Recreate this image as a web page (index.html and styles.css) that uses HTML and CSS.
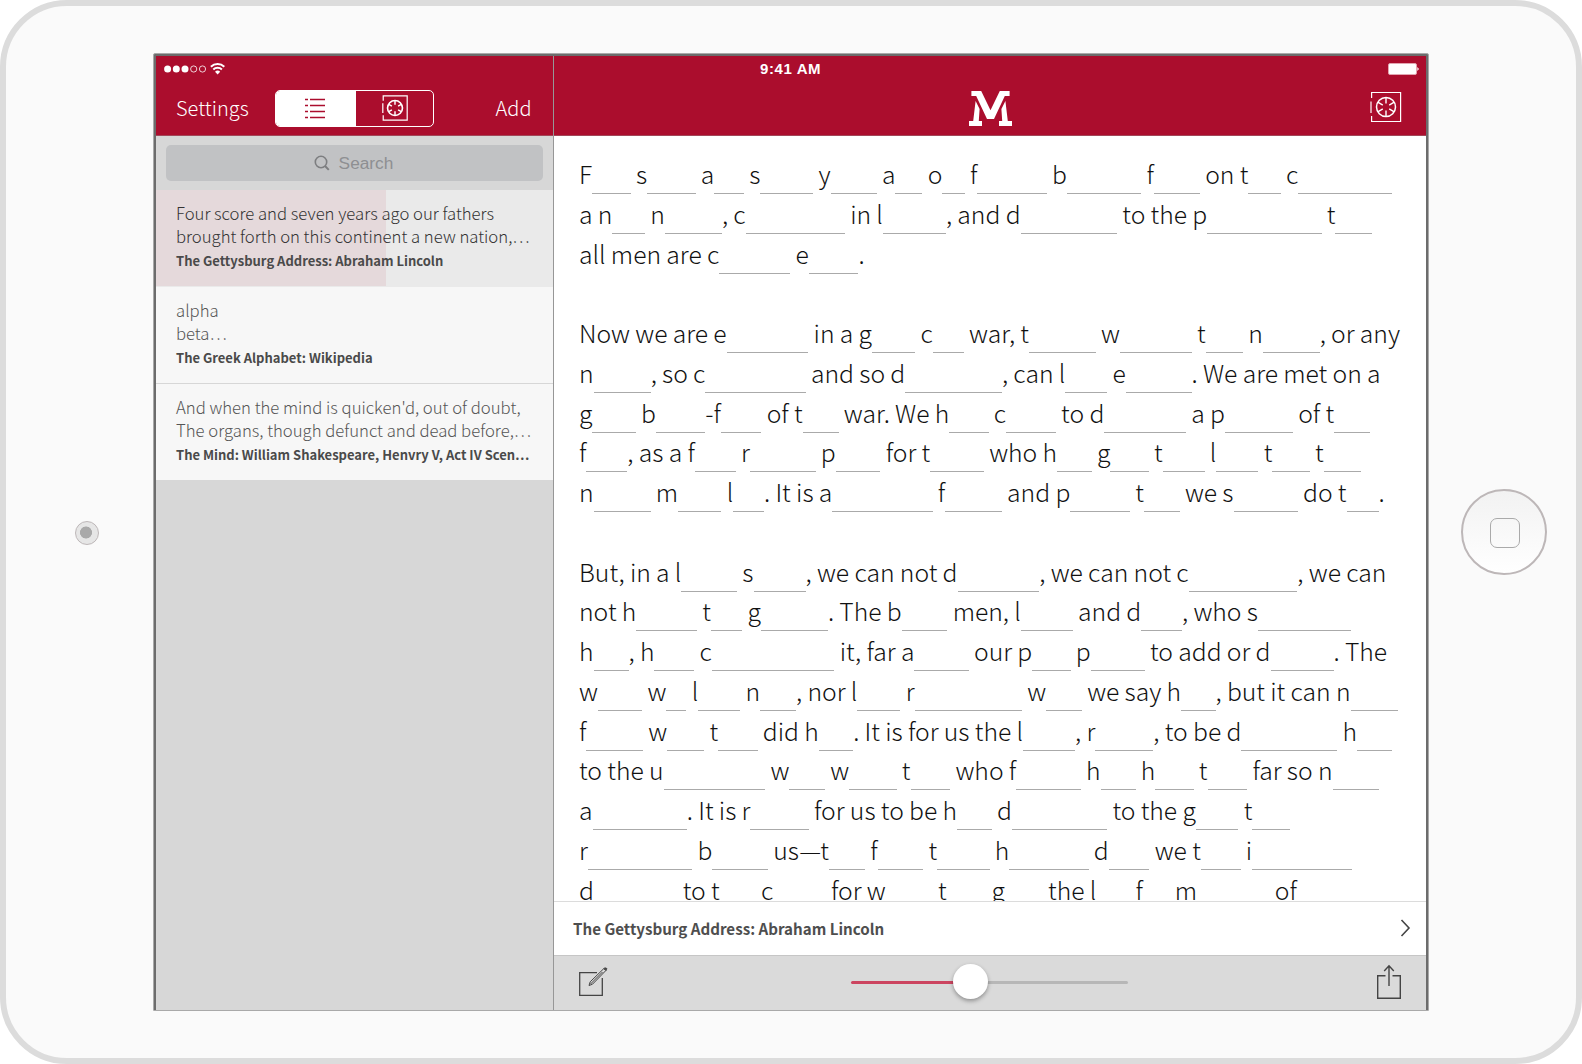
FILE: index.html
```html
<!DOCTYPE html>
<html lang="en">
<head>
<meta charset="utf-8">
<title>The Gettysburg Address</title>
<link rel="stylesheet" href="styles.css">
</head>
<body>
<div class="device">
  <div class="bezel bezel-left"><div class="camera"></div></div>
  <div class="screen">
    <aside class="sidebar">
      <header class="bar side-bar">
        <div class="status">
          <svg width="62" height="14" viewBox="0 0 62 14" fill="#fff">
            <circle cx="3.6" cy="7" r="3.5"/><circle cx="12.3" cy="7" r="3.5"/><circle cx="21" cy="7" r="3.5"/>
            <g fill="none" stroke="#fff" stroke-width=".8"><circle cx="29.7" cy="7" r="3.1"/><circle cx="38.5" cy="7" r="3.1"/></g>
            <g fill="none" stroke="#fff" stroke-width="2"><path d="M46.9 4.7a9.6 9.6 0 0 1 13.4 0M49.3 7.5a6.2 6.2 0 0 1 8.6 0"/></g>
            <path d="M53.6 12.4l-2.6-2.6a3.8 3.8 0 0 1 5.2 0z"/>
          </svg>
        </div>
        <nav class="nav">
          <span class="link">Settings</span>
          <div class="segments">
            <span class="segment on">
              <svg width="22" height="22" viewBox="0 0 22 22" stroke="#ab0d2d" stroke-width="1.3" fill="none"><path d="M1 1.5h3M6 1.5h15M1 7.5h3M6 7.5h15M1 13.5h3M6 13.5h15M1 19.5h3M6 19.5h15"/></svg>
            </span>
            <span class="segment">
              <svg width="26" height="26" viewBox="0 0 32 32" fill="none" stroke="#fff" stroke-width="1.5"><path d="M1.5 7V1H31v30H1.5v-6M1 10v12"/><circle cx="16" cy="16" r="9.2" stroke-width="2"/><path stroke-width="1.8" d="M16 7v5M16 20v5M8.2 11.5l4 2.3M19.8 18.2l4 2.3M8.2 20.5l4-2.3M19.8 13.8l4-2.3"/></svg>
            </span>
          </div>
          <span class="link">Add</span>
        </nav>
      </header>
      <div class="search">
        <div class="search-box">
          <svg width="16" height="16" viewBox="0 0 16 16" fill="none" stroke="#7d7e80" stroke-width="1.6"><circle cx="7" cy="7" r="5.7"/><path d="M11 11l3.8 3.9" stroke-width="2"/></svg>
          <span>Search</span>
        </div>
      </div>
      <ul class="list">
        <li class="item selected"><p>Four score and seven years ago our fathers</p><p>brought forth on this continent a new nation,…</p><b>The Gettysburg Address: Abraham Lincoln</b></li>
        <li class="item"><p>alpha</p><p>beta…</p><b>The Greek Alphabet: Wikipedia</b></li>
        <li class="item"><p>And when the mind is quicken'd, out of doubt,</p><p>The organs, though defunct and dead before,…</p><b>The Mind: William Shakespeare, Henvry V, Act IV Scen…</b></li>
      </ul>
    </aside>
    <main class="reader">
      <header class="bar main-bar">
        <span class="time">9:41 AM</span>
        <svg class="logo" width="43" height="35" viewBox="0 0 43 35" fill="#fff"><path d="M2.4 0h9.8l9.3 19.3L30.8 0h9.8v5h-4.8L25 28h-7L7.200 5H2.400z"/><path d="M6.600 10l4 8-.8 12H13v5H0v-5h4.200zM36.400 10l-4 8 .8 12H30v5h13v-5h-4.200z"/></svg>
        <div class="right-tools">
          <svg width="31" height="12" viewBox="0 0 31 12" fill="#fff"><rect x=".5" y=".5" width="28" height="11" rx="1.500" fill="#fff" stroke="#e3a5b1"/><path d="M29.300 4l1.700 2-1.700 2z"/></svg>
          <svg class="mode" width="32" height="32" viewBox="0 0 32 32" fill="none" stroke="#fff" stroke-width="1.200"><path d="M1.600 7V1.500h29v29h-29V25M1 10.500v11.500"/><circle cx="16" cy="16" r="9.500" stroke-width="1.500"/><path stroke-width="1.400" d="M16 6.500v6M16 19.500v6M7.800 11.200l5 3M19.200 17.800l5 3M7.800 20.800l5-3M19.200 14.200l5-3"/></svg>
        </div>
      </header>
      <article class="text">
        <p>F<i style="width:38.7px"></i> s<i style="width:48.3px"></i> a<i style="width:29.7px"></i> s<i style="width:53px"></i> y<i style="width:46px"></i> a<i style="width:27px"></i> o<i style="width:22.3px"></i> f<i style="width:69.4px"></i> b<i style="width:74.6px"></i> f<i style="width:46px"></i> on t<i style="width:32.3px"></i> c<i style="width:93.9px"></i></p>
        <p>a n<i style="width:32.7px"></i> n<i style="width:57px"></i>, c<i style="width:99.3px"></i> in l<i style="width:63px"></i>, and d<i style="width:96.5px"></i> to the p<i style="width:114.3px"></i> t<i style="width:36.7px"></i></p>
        <p>all men are c<i style="width:71px"></i> e<i style="width:49.7px"></i>.</p>
        <p></p>
        <p>Now we are e<i style="width:81.7px"></i> in a g<i style="width:43.3px"></i> c<i style="width:31px"></i> war, t<i style="width:66.7px"></i> w<i style="width:72px"></i> t<i style="width:37.3px"></i> n<i style="width:56.7px"></i>, or any</p>
        <p>n<i style="width:57px"></i>, so c<i style="width:100.3px"></i> and so d<i style="width:96.7px"></i>, can l<i style="width:42px"></i> e<i style="width:65.7px"></i>. We are met on a</p>
        <p>g<i style="width:43.3px"></i> b<i style="width:49.3px"></i>-f<i style="width:40.7px"></i> of t<i style="width:36px"></i> war. We h<i style="width:39.3px"></i> c<i style="width:49.7px"></i> to d<i style="width:81.7px"></i> a p<i style="width:68px"></i> of t<i style="width:36px"></i></p>
        <p>f<i style="width:41px"></i>, as a f<i style="width:41px"></i> r<i style="width:65.7px"></i> p<i style="width:44.7px"></i> for t<i style="width:53.7px"></i> who h<i style="width:34.7px"></i> g<i style="width:38.3px"></i> t<i style="width:42px"></i> l<i style="width:42px"></i> t<i style="width:37.3px"></i> t<i style="width:37px"></i></p>
        <p>n<i style="width:57px"></i> m<i style="width:43.3px"></i> l<i style="width:30.7px"></i>. It is a<i style="width:100.3px"></i> f<i style="width:56.7px"></i> and p<i style="width:59.7px"></i> t<i style="width:35.7px"></i> we s<i style="width:64.3px"></i> do t<i style="width:32px"></i>.</p>
        <p></p>
        <p>But, in a l<i style="width:55.7px"></i> s<i style="width:52px"></i>, we can not d<i style="width:81.7px"></i>, we can not c<i style="width:108.7px"></i>, we can</p>
        <p>not h<i style="width:60.7px"></i> t<i style="width:31.3px"></i> g<i style="width:67px"></i>. The b<i style="width:45.7px"></i> men, l<i style="width:52px"></i> and d<i style="width:40.7px"></i>, who s<i style="width:93px"></i></p>
        <p>h<i style="width:35px"></i>, h<i style="width:39.7px"></i> c<i style="width:122.7px"></i> it, far a<i style="width:54.3px"></i> our p<i style="width:38.3px"></i> p<i style="width:54px"></i> to add or d<i style="width:63px"></i>. The</p>
        <p>w<i style="width:44.3px"></i> w<i style="width:20px"></i> l<i style="width:42px"></i> n<i style="width:36px"></i>, nor l<i style="width:43px"></i> r<i style="width:107.5px"></i> w<i style="width:35.7px"></i> we say h<i style="width:34.4px"></i>, but it can n<i style="width:47px"></i></p>
        <p>f<i style="width:56.7px"></i> w<i style="width:37px"></i> t<i style="width:39.4px"></i> did h<i style="width:34.4px"></i>. It is for us the l<i style="width:52px"></i>, r<i style="width:58px"></i>, to be d<i style="width:96px"></i> h<i style="width:34.7px"></i></p>
        <p>to the u<i style="width:101.7px"></i> w<i style="width:35.7px"></i> w<i style="width:47.3px"></i> t<i style="width:39.7px"></i> who f<i style="width:64.6px"></i> h<i style="width:35px"></i> h<i style="width:38.3px"></i> t<i style="width:39.7px"></i> far so n<i style="width:46.7px"></i></p>
        <p>a<i style="width:94.3px"></i>. It is r<i style="width:58.3px"></i> for us to be h<i style="width:34.7px"></i> d<i style="width:95.3px"></i> to the g<i style="width:42.6px"></i> t<i style="width:37.3px"></i></p>
        <p>r<i style="width:104.3px"></i> b<i style="width:55.7px"></i> us—t<i style="width:36px"></i> f<i style="width:45.7px"></i> t<i style="width:52.3px"></i> h<i style="width:79.3px"></i> d<i style="width:40.7px"></i> we t<i style="width:39.7px"></i> i<i style="width:100.3px"></i></p>
        <p>d<i style="width:83.5px"></i> to t<i style="width:36px"></i> c<i style="width:52.500px"></i> for w<i style="width:47px"></i> t<i style="width:39.500px"></i> g<i style="width:38px"></i> the l<i style="width:34px"></i> f<i style="width:26.500px"></i> m<i style="width:72.500px"></i> of</p>
      </article>
      <div class="source">
        <b>The Gettysburg Address: Abraham Lincoln</b>
        <svg width="11" height="18" viewBox="0 0 11 18" fill="none" stroke="#444" stroke-width="1.600"><path d="M1.500 1l7.500 8-7.500 8"/></svg>
      </div>
      <footer class="toolbar">
        <svg width="30" height="30" viewBox="0 0 30 30" fill="none" stroke="#444" stroke-width="1.300"><path d="M19 5.700H1.700v22.600h22.600V11"/><path d="M11 18.500l1.200-3.700L25.800 1.600l2 2L14.500 17.200zM12.500 17l12-12" stroke-width="1"/><path d="M26 1.500l1-.8 2 .9-1 2z" fill="#444" stroke-width=".8"/></svg>
        <div class="slider"><span class="done"></span><span class="rest"></span><span class="knob"></span></div>
        <svg width="26" height="36" viewBox="0 0 26 36" fill="none" stroke="#444" stroke-width="1.400"><path d="M9.500 11.700H1.700v22.600h22.600V11.700h-7.800M13 22V2M8.200 7L13 1.700 17.800 7"/></svg>
      </footer>
    </main>
  </div>
  <div class="bezel bezel-right"><div class="home"><span></span></div></div>
</div>
</body>
</html>
```
FILE: styles.css
```css
* { box-sizing: border-box; }
body { margin: 0; background: #fff; font-family: "Noto Sans CJK SC", "Noto Sans", sans-serif; font-weight: 300; }
p, ul { margin: 0; padding: 0; }
svg { display: block; }
b { font-weight: 700; }

.device { display: flex; width: 1582px; height: 1064px; padding-top: 47px; background: #fafafa; border: 6px solid #dcdcdc; border-radius: 67px; }
.bezel { height: 958px; display: flex; align-items: center; }
.bezel-left { width: 147px; padding: 2px 0 0 69px; }
.bezel-right { flex: 1; padding-left: 32px; }
.camera { width: 24px; height: 24px; border: 1px solid #bdb7b8; border-radius: 50%; background: radial-gradient(circle at 10px 10.5px, #a9a9a9 5.7px, #e6e6e6 6.3px); }
.home { width: 86px; height: 86px; display: flex; align-items: center; justify-content: center; padding: 2px 0 0 2px; border: 2px solid #bdb7b8; border-radius: 50%; background: linear-gradient(#f2f2f2, #fff); }
.home span { width: 30px; height: 30px; border: 1px solid #aaa; border-radius: 7px; }

.screen { display: flex; width: 1276px; height: 958px; padding: 2px 2px 0; border: 1px solid #a9a9a9; border-radius: 2px 2px 1px 1px; background: #6c6c6c; }
.bar { height: 80px; background: #ab0d2d; border-bottom: 1px solid #a34658; color: #fff; }

.sidebar { width: 398px; border-right: 1px solid #979797; background: #d7d7d7; }
.status { height: 26px; padding: 6px 0 0 8px; }
.nav { display: flex; align-items: center; justify-content: space-between; height: 52px; padding: 0 21.5px 0 20px; font-size: 20px; line-height: 30px; }
.segments { display: flex; width: 159px; height: 37px; margin-right: 34.5px; border: 1px solid #fff; border-radius: 5px; overflow: hidden; }
.segment { flex: 1; display: flex; align-items: center; justify-content: center; }
.segment.on { padding: 1px 2px 0 0; background: #fff; }
.search { height: 54px; padding: 9px 10px 0; }
.search-box { display: flex; align-items: center; justify-content: center; gap: 9px; height: 36px; padding-right: 2px; border-radius: 5px; background: #c1c2c4; color: #8e8f92; font: 17.3px "Liberation Sans", sans-serif; }

.list { list-style: none; }
.item { height: 97px; padding: 12px 0 0 20px; background: #f7f7f7; border-bottom: 1px solid #d7d7d7; color: #555; white-space: nowrap; }
.item p { font-size: 16.7px; line-height: 23px; }
.item b { display: block; padding-top: 1px; font-size: 13px; line-height: 24px; color: #4a4a4a; }
.item.selected { background: linear-gradient(90deg, #e5d9db 230px, #eaeaea 230px); color: #333; border-color: #eaeaea; }

.reader { flex: 1; display: flex; flex-direction: column; background: #fff; min-width: 0; }
.main-bar { display: grid; grid-template-columns: 415px 1fr auto; }
.time { padding: 4px 0 0 206px; font: bold 15px/17px "Liberation Sans", sans-serif; letter-spacing: .6px; }
.logo { margin-top: 35px; }
.right-tools { display: flex; flex-direction: column; align-items: flex-end; padding: 7px 7px 0 0; }
.mode { margin: 16px 17px 0 0; }
.text { height: 765px; padding: 18px 0 0 25px; overflow: hidden; font-size: 24.7px; line-height: 39.75px; word-spacing: -.22px; color: #111; white-space: nowrap; }
.text p { height: 39.75px; }
.text i { display: inline-block; height: 1px; background: #aaa; vertical-align: -10px; }
.source { display: flex; align-items: center; justify-content: space-between; height: 54px; padding: 0 15px 2px 19px; border-top: 1px solid #dcdcdc; font-size: 15.15px; color: #4e4e4e; }
.source b { padding-top: 1px; }
.toolbar { display: flex; align-items: center; justify-content: space-between; height: 55px; padding: 0 24px 2px; border-top: 1px solid #c6c6c6; background: #dadada; }
.slider { display: flex; align-items: center; width: 277px; height: 35px; position: relative; margin-right: 6px; }
.done { width: 120px; height: 3px; border-radius: 2px 0 0 2px; background: #cc4560; }
.rest { flex: 1; height: 3px; border-radius: 0 2px 2px 0; background: #b7b7b7; }
.knob { position: absolute; left: 102px; top: -1px; width: 35px; height: 35px; border-radius: 50%; background: #fff; box-shadow: 0 2px 4px rgba(0, 0, 0, .35); }
```
